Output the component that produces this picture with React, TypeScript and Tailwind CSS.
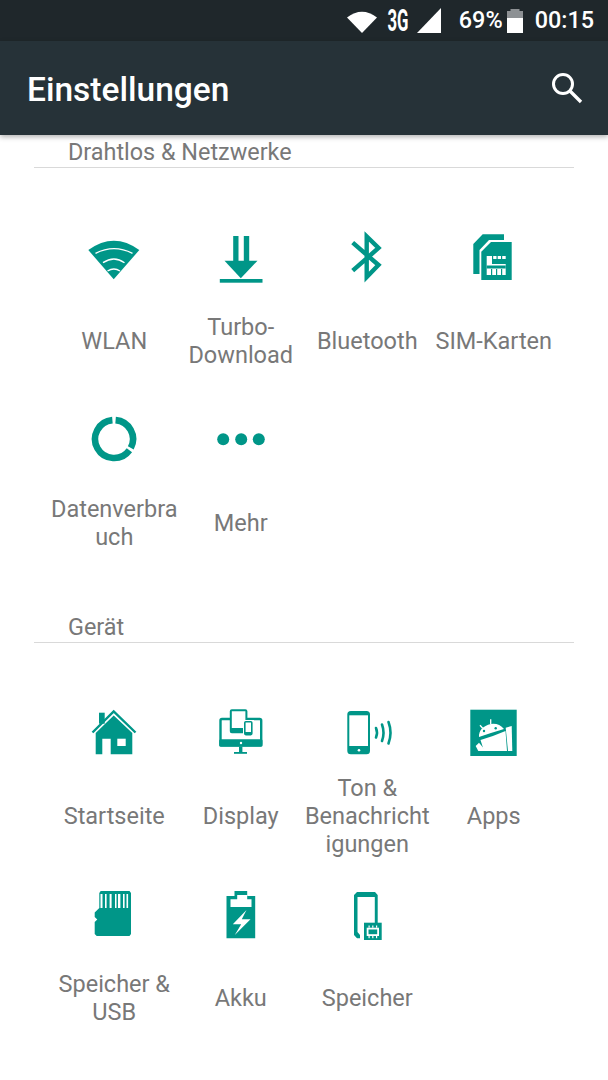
import type { ReactNode } from 'react'

const TEAL = '#009688'

function Icon({ children }: { children: ReactNode }) {
  return (
    <svg viewBox="0 0 64 64" className="w-16 h-16 block" fill={TEAL}>
      {children}
    </svg>
  )
}

const WifiIcon = () => (
  <Icon>
    <path d="M6.3 25Q32 6.4 57.3 25L31.7 54.3Z" />
    <g fill="none" stroke="#fff" strokeWidth="1.4">
      <path d="M13.5 28.3Q32 18.9 50.5 28.3" />
      <path d="M21 37.7Q32 30.3 42.5 37.7" />
      <path d="M25.5 46Q32 42 38 46" />
    </g>
  </Icon>
)

const DownloadIcon = () => (
  <Icon>
    <rect x="24.2" y="11" width="5.3" height="26" />
    <rect x="34.8" y="11" width="5.4" height="26" />
    <path d="M15.5 35.7H48.5L31.8 53.3Z" />
    <rect x="10.8" y="54" width="42.7" height="3.7" />
  </Icon>
)

const BluetoothIcon = () => (
  <Icon>
    <path
      d="M17.7 17.7L43.5 40L31.7 52V11.5L43.5 23L17.7 45.7"
      fill="none"
      stroke={TEAL}
      strokeWidth="4.4"
    />
  </Icon>
)

const SimIcon = () => (
  <Icon>
    <path d="M20.7 9.3H42V15H27L17.5 25V49H11.3V19Z" />
    <path d="M29 17H49.7V55H19.3V26.7Z" />
    <rect x="24.7" y="31" width="19" height="19" fill="#fff" />
    <rect x="30" y="34" width="14" height="5" />
    <path d="M24.7 40.5H43.7V43.5H24.7Z" />
    <g>
      <rect x="30" y="31" width="1.2" height="4" />
      <rect x="34.5" y="31" width="1.2" height="4" />
      <rect x="39" y="31" width="1.2" height="4" />
      <rect x="29" y="44" width="1.2" height="6" />
      <rect x="34" y="44" width="1.2" height="6" />
      <rect x="39" y="44" width="1.2" height="6" />
    </g>
  </Icon>
)

const DataIcon = () => (
  <Icon>
    <g fill="none" stroke={TEAL} strokeWidth="6.6">
      <path d="M33.6 13.1A19 19 0 0 1 48.8 40.9" />
      <path d="M47.4 43.2A19 19 0 1 1 30.4 13.1" />
    </g>
  </Icon>
)

const MoreIcon = () => (
  <Icon>
    <circle cx="14.2" cy="32.3" r="6" />
    <circle cx="32.2" cy="32.3" r="6" />
    <circle cx="49.8" cy="32.3" r="6" />
  </Icon>
)

const HomeIcon = () => (
  <Icon>
    <rect x="17" y="12.7" width="5.7" height="11" />
    <path d="M10.5 32.5L31.7 11.5L53.5 32.5" fill="none" stroke={TEAL} strokeWidth="2.4" />
    <path d="M13.7 33L31.7 15.5L50.3 33V54.3H28.7V38.7H20.3V54.3H13.7Z" />
    <rect x="35.3" y="38.7" width="8.4" height="7.3" fill="#fff" />
  </Icon>
)

const DisplayIcon = () => (
  <Icon>
    <rect x="11.5" y="19" width="40.7" height="26.4" rx="1.5" fill="none" stroke={TEAL} strokeWidth="2.4" />
    <rect x="10.2" y="39.3" width="43.3" height="7.4" rx="1.5" />
    <circle cx="32" cy="43" r="1.2" fill="#fff" />
    <rect x="30" y="46.7" width="3.4" height="5.5" />
    <rect x="25" y="52" width="13" height="1.8" />
    <rect x="21.8" y="10.3" width="15.6" height="22" rx="1" fill="#fff" stroke={TEAL} strokeWidth="2" />
    <rect x="21.8" y="28" width="15.6" height="4.5" />
    <rect x="34" y="20" width="11" height="16.5" fill="#fff" />
    <rect x="35.8" y="21.8" width="7" height="12.8" rx="1" fill="#fff" stroke={TEAL} strokeWidth="1.6" />
    <rect x="35.8" y="32" width="7" height="2.6" />
  </Icon>
)

const SoundIcon = () => (
  <Icon>
    <rect x="12.3" y="11" width="22.7" height="43.3" rx="3.5" />
    <rect x="14.3" y="15.3" width="18.7" height="30.7" fill="#fff" />
    <circle cx="24" cy="50.2" r="1.3" fill="#fff" />
    <g fill="none" stroke={TEAL} strokeWidth="2.6" strokeLinecap="round">
      <path d="M41 28Q43 32.7 41 37.5" />
      <path d="M47 24.5Q50 32.7 47 41" />
      <path d="M53.5 22Q57.5 32.7 53.5 43.5" />
    </g>
  </Icon>
)

const AppsIcon = () => (
  <Icon>
    <rect x="8.3" y="9.7" width="46.4" height="46.3" />
    <g fill="#fff">
      <path d="M17 37Q16.5 27 29 24Q37 23 42 29Q30 32.5 17 37Z" />
      <path d="M18.5 40Q32 36 43.5 31L45 51H22Z" />
      <path d="M43.7 27.7L49.7 26L50.3 51H46Z" />
      <path d="M13.7 46L17 42.7L24 51H16.3Z" />
    </g>
    <g stroke="#fff" strokeWidth="1.3">
      <path d="M28.7 19.3V24.3" />
      <path d="M18 25.3L20.7 28.3" />
    </g>
    <circle cx="22" cy="31" r="1.2" />
    <circle cx="33.7" cy="28.3" r="1.2" />
  </Icon>
)

const SdIcon = () => (
  <Icon>
    <path d="M18.7 9H47.5L49 11V52L47.5 54H14.7L12.7 52V40L15.3 37.5L12.7 35V30.5L17.3 26V11Z" />
    <g fill="#fff">
      <rect x="18.5" y="12" width="2" height="14" />
      <rect x="23" y="12" width="1.6" height="14" />
      <rect x="27.6" y="12" width="2" height="14" />
      <rect x="33" y="12" width="1.5" height="14" />
      <rect x="36" y="12" width="2.4" height="14" />
      <rect x="41" y="12" width="1.6" height="14" />
      <rect x="44.5" y="12" width="1.6" height="14" />
    </g>
  </Icon>
)

const BatteryIcon = () => (
  <Icon>
    <path d="M25.5 9H38.2V14H46.2V56.3H17.5V14H25.5Z" />
    <path d="M21.5 17.3H28.2V13H38.2V17.3H42.5V25H21.5Z" fill="#fff" />
    <path d="M37.5 28L23.8 42.3H32.2L25.8 53L41.5 37.3H32.8Z" fill="#fff" />
  </Icon>
)

const StorageIcon = () => (
  <Icon>
    <path d="M22 10H40L42.7 13V42H39.8V15H22.5V50L25 53V56.3H22L19 53V13Z" />
    <rect x="29" y="40.7" width="17.7" height="17.3" />
    <rect x="31.7" y="45.7" width="12.3" height="8.3" fill="#fff" />
    <rect x="33.5" y="47.5" width="8.7" height="4.7" />
    <g fill="#fff">
      <rect x="33.5" y="43.5" width="1.2" height="2.2" />
      <rect x="37.2" y="43.5" width="1.2" height="2.2" />
      <rect x="41" y="43.5" width="1.2" height="2.2" />
      <rect x="33.5" y="54" width="1.2" height="2.2" />
      <rect x="37.2" y="54" width="1.2" height="2.2" />
      <rect x="41" y="54" width="1.2" height="2.2" />
    </g>
  </Icon>
)

type Item = { icon: ReactNode; label: string[] }

const wireless: Item[] = [
  { icon: <WifiIcon />, label: ['WLAN'] },
  { icon: <DownloadIcon />, label: ['Turbo-', 'Download'] },
  { icon: <BluetoothIcon />, label: ['Bluetooth'] },
  { icon: <SimIcon />, label: ['SIM-Karten'] },
  { icon: <DataIcon />, label: ['Datenverbra', 'uch'] },
  { icon: <MoreIcon />, label: ['Mehr'] },
]

const device: Item[] = [
  { icon: <HomeIcon />, label: ['Startseite'] },
  { icon: <DisplayIcon />, label: ['Display'] },
  { icon: <SoundIcon />, label: ['Ton &', 'Benachricht', 'igungen'] },
  { icon: <AppsIcon />, label: ['Apps'] },
  { icon: <SdIcon />, label: ['Speicher &', 'USB'] },
  { icon: <BatteryIcon />, label: ['Akku'] },
  { icon: <StorageIcon />, label: ['Speicher'] },
]

function Section({ title, items, className }: { title: string; items: Item[]; className?: string }) {
  return (
    <section className={className}>
      <div className="mx-[34px] h-[33px] pl-[34px] border-b border-[#d9d9d9] text-[23.4px] leading-[35px] text-[#787878]">
        {title}
      </div>
      <div className="grid grid-cols-4 px-[51px] pt-[57px]">
        {items.map((item) => (
          <div key={item.label.join('')} className="h-[182px] flex flex-col items-center">
            {item.icon}
            <div className="mt-[10px] h-[84px] flex flex-col items-center justify-center text-[23.5px] leading-[28px] text-[#787878] whitespace-nowrap">
              {item.label.map((line) => (
                <span key={line}>{line}</span>
              ))}
            </div>
          </div>
        ))}
      </div>
    </section>
  )
}

export default function App() {
  return (
    <div className="w-[608px] h-[1080px] bg-white overflow-hidden font-['Roboto',sans-serif]">
      <div className="h-[41px] bg-[#1f272b] flex items-center justify-end text-white text-[23.4px] font-medium pr-[14px]">
        <svg viewBox="0 0 30 24" className="w-[30px] h-[24px] mr-[11px]">
          <path d="M0 8.5Q15 -3 30 8.5L15 24Z" fill="#fff" />
        </svg>
        <span className="w-[20px] flex justify-center text-[31px] leading-[31px] font-bold scale-x-[0.54] mr-[9px]">3G</span>
        <svg viewBox="0 0 24 25" className="w-[24px] h-[25px] mr-[18px]">
          <path d="M0 25L24 0V25Z" fill="#fff" />
        </svg>
        <span className="mr-[4px]">69%</span>
        <svg viewBox="0 0 16 24" className="w-[16px] h-[24px] mr-[12px]">
          <path d="M3.5 0H12.5V2H16V9H0V2H3.5Z" fill="#8d9194" />
          <rect x="0" y="9" width="16" height="15" fill="#fff" />
        </svg>
        <span>00:15</span>
      </div>
      <div className="relative z-10 h-[94px] bg-[#263238] shadow-[0_2px_5px_rgba(0,0,0,0.3)] flex items-center justify-between pl-[27px] pr-[25px]">
        <span className="text-white text-[33.5px] font-medium mt-[5px]">Einstellungen</span>
        <svg viewBox="0 0 32 32" className="w-[32px] h-[32px]" fill="none" stroke="#fff" strokeWidth="3">
          <circle cx="12" cy="12" r="9.5" />
          <path d="M19 19L30 30" strokeWidth="3.4" />
        </svg>
      </div>
      <Section title="Drahtlos & Netzwerke" items={wireless} />
      <Section title="Gerät" items={device} className="mt-[21px]" />
    </div>
  )
}
